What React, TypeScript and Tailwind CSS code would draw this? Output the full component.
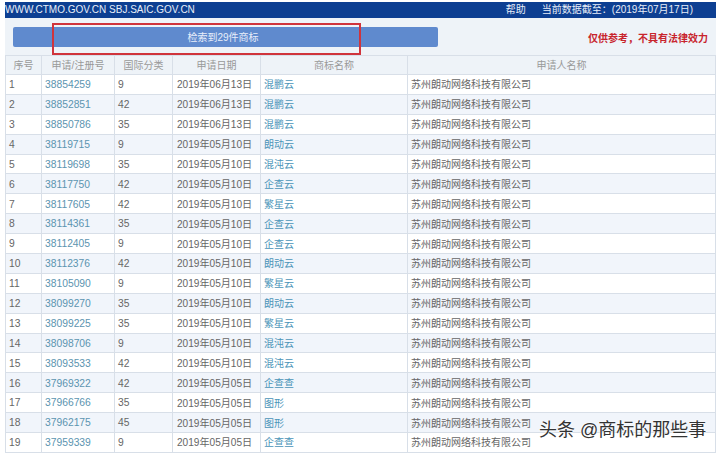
const rows = [
  ['1', '38854259', '9', '2019年06月13日', '混鹏云'],
  ['2', '38852851', '42', '2019年06月13日', '混鹏云'],
  ['3', '38850786', '35', '2019年06月13日', '混鹏云'],
  ['4', '38119715', '9', '2019年05月10日', '朗动云'],
  ['5', '38119698', '35', '2019年05月10日', '混沌云'],
  ['6', '38117750', '42', '2019年05月10日', '企查云'],
  ['7', '38117605', '42', '2019年05月10日', '繁星云'],
  ['8', '38114361', '35', '2019年05月10日', '企查云'],
  ['9', '38112405', '9', '2019年05月10日', '企查云'],
  ['10', '38112376', '42', '2019年05月10日', '朗动云'],
  ['11', '38105090', '9', '2019年05月10日', '繁星云'],
  ['12', '38099270', '35', '2019年05月10日', '朗动云'],
  ['13', '38099225', '35', '2019年05月10日', '繁星云'],
  ['14', '38098706', '9', '2019年05月10日', '混沌云'],
  ['15', '38093533', '42', '2019年05月10日', '混沌云'],
  ['16', '37969322', '42', '2019年05月05日', '企查查'],
  ['17', '37966766', '35', '2019年05月05日', '图形'],
  ['18', '37962175', '45', '2019年05月05日', '图形'],
  ['19', '37959339', '9', '2019年05月05日', '企查查'],
];

const cols = 'grid grid-cols-[36px_73px_58px_88px_147px_1fr]';
const cell = 'flex items-center border-r border-[#d8dfe8] pt-[1px] last:border-r-0';
const head = 'flex items-center justify-center border-r border-[#d8dfe8] pt-[1px] last:border-r-0';

export default function App() {
  return (
    <div className="relative h-[453px] w-[720px] overflow-hidden bg-white pl-[5px] pr-[4px] pt-[2px] font-['Liberation_Sans','Noto_Sans_CJK_SC',sans-serif] text-[10.3px] text-[#666]">
      <div className="flex h-[16px] items-center justify-between bg-[#0d3f92] pr-[23px] text-[10px] text-[#e8eef8]">
        <span className="leading-none">WWW.CTMO.GOV.CN SBJ.SAIC.GOV.CN</span>
        <div className="flex gap-[16px] leading-none">
          <span>帮助</span>
          <span>当前数据截至：(2019年07月17日)</span>
        </div>
      </div>

      <div className="flex h-[37px] items-start justify-between bg-[#eef3f8] pl-[8px] pr-[8px] pt-[9px]">
        <div className="flex h-[20px] w-[425px] items-center justify-center rounded-[2px] bg-[#5f8ace] pr-[5px] text-[10px] text-[#e8eefa]">
          检索到29件商标
        </div>
        <span className="mt-[4px] text-[10px] font-bold text-[#c8242c]">仅供参考，不具有法律效力</span>
      </div>

      <div className="border-x border-[#d8dfe8]">
        <div className={`${cols} h-[20px] border-y border-[#d8dfe8] bg-[#eef3f8] text-[10px] text-[#999]`}>
          <div className={head}>序号</div>
          <div className={head}>申请/注册号</div>
          <div className={head}>国际分类</div>
          <div className={head}>申请日期</div>
          <div className={head}>商标名称</div>
          <div className={head}>申请人名称</div>
        </div>
        {rows.map((r, i) => (
          <div
            key={r[0]}
            className={`${cols} h-[19.9px] border-b border-[#d8dfe8] ${i % 2 === 1 ? 'bg-[#f1f5fb]' : 'bg-white'}`}
          >
            <div className={`${cell} pl-[3px]`}>{r[0]}</div>
            <div className={`${cell} pl-[3px] text-[#5b94b0]`}>{r[1]}</div>
            <div className={`${cell} pl-[3px]`}>{r[2]}</div>
            <div className={`${cell} pl-[4px] text-[10.1px]`}>{r[3]}</div>
            <div className={`${cell} pl-[3px] text-[10px] text-[#4a94b8]`}>{r[4]}</div>
            <div className={`${cell} pl-[3px] text-[10px]`}>苏州朗动网络科技有限公司</div>
          </div>
        ))}
      </div>

      {/* annotation drawn over the search bar */}
      <div className="absolute left-[52px] top-[23px] h-[32px] w-[309px] border-2 border-[#d0343c]" />
      <div className="absolute left-[539px] top-[421px] text-[18px] leading-none text-[#333] [text-shadow:0_0_2px_#fff,0_0_2px_#fff]">
        头条 @商标的那些事
      </div>
    </div>
  );
}
